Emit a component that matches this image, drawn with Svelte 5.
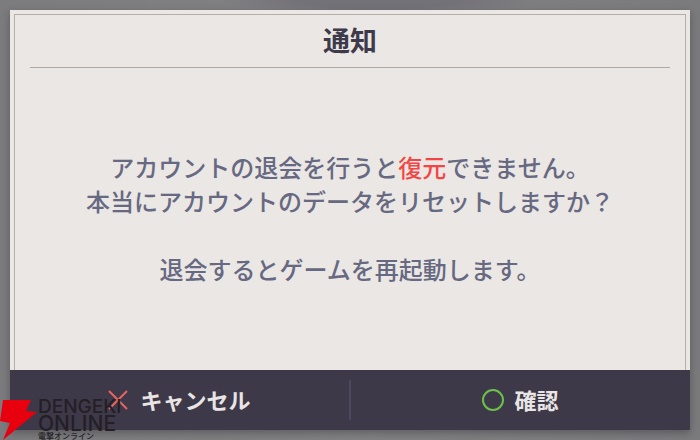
<script lang="ts">
	import { createEventDispatcher } from 'svelte';

	export let title = '通知';

	const dispatch = createEventDispatcher();
</script>

<div class="screen">
	<div class="dialog" role="alertdialog" aria-labelledby="notice-title" aria-describedby="notice-text">
		<div class="content">
			<h1 id="notice-title">{title}</h1>
			<p id="notice-text">
				アカウントの退会を行うと<em>復元</em>できません。<br />
				本当にアカウントのデータをリセットしますか？<br />
				<br />
				退会するとゲームを再起動します。
			</p>
		</div>

		<div class="actions">
			<button class="action-btn" on:click={() => dispatch('cancel')}>
				<svg width="20" height="20" viewBox="0 0 20 20" aria-hidden="true">
					<path d="M1 1L19 19M19 1L1 19" fill="none" stroke="#e9645f" stroke-width="2" />
				</svg>
				<span>キャンセル</span>
			</button>
			<span class="divider"></span>
			<button class="action-btn confirm" on:click={() => dispatch('confirm')}>
				<svg width="22" height="22" viewBox="0 0 22 22" aria-hidden="true">
					<circle cx="11" cy="11" r="10" fill="none" stroke="#6cc04a" stroke-width="2" />
				</svg>
				<span>確認</span>
			</button>
		</div>
	</div>

	<div class="watermark">
		<svg width="37" height="40" viewBox="0 0 37 40" aria-hidden="true">
			<path d="M3 0H31L26 11L37 12L3 40L10 23L0 21Z" fill="#e8000f" />
		</svg>
		<div class="watermark-text">
			<span>DENGEKI</span>
			<span class="wide">ONLINE</span>
			<small>電撃オンライン</small>
		</div>
	</div>
</div>

<style>
	:global(body) { margin: 0; }
	.screen {
		position: relative; display: flex; box-sizing: border-box;
		min-height: 100vh; padding: 10px; overflow: hidden;
		font-family: "Noto Sans CJK JP", sans-serif;
		background:
			radial-gradient(ellipse 160px 16px at 54% 0, #747279 50%, transparent),
			linear-gradient(90deg, #7c7c7e, #828183 50%, #7b7b7d);
	}
	.dialog {
		flex: 1; display: flex; flex-direction: column;
		background: #ebe7e4; box-shadow: 0 3px 8px rgba(50, 50, 55, 0.45);
	}
	.content {
		flex: 1; display: flex; flex-direction: column;
		margin: 4px 4px 0; padding: 0 15px;
		border: 1px solid #b5aea8; border-bottom: none;
	}
	h1 {
		margin: 0; padding: 5px 0 7px; border-bottom: 1px solid #b0a9a3;
		color: #3d3a4b; font-size: 27px; line-height: 40px;
		font-weight: 700; text-align: center;
	}
	p {
		margin: auto 0; padding-bottom: 2px; color: #666981;
		font-size: 24px; line-height: 34px; font-weight: 500; text-align: center;
	}
	em { color: #f44545; font-style: normal; }
	.actions {
		display: flex; align-items: center; height: 60px; background: #3d3949;
	}
	.action-btn {
		flex: 1; display: flex; align-items: center; justify-content: center;
		gap: 12px; height: 100%; padding: 0; border: none; background: none;
		color: #e9e5e4; font-family: inherit; font-size: 22px; font-weight: 700;
		line-height: 32px; cursor: pointer;
	}
	.action-btn span { padding-bottom: 2px; }
	.action-btn.confirm { gap: 10px; }
	.action-btn:hover { background-color: #474357; }
	.divider { width: 2px; height: 40px; background: #4b4860; }
	.watermark {
		position: absolute; left: 0; bottom: 0; display: flex;
		align-items: flex-end; gap: 1px; pointer-events: none;
	}
	.watermark-text {
		display: flex; flex-direction: column; color: #231f25;
		font-family: Inter, sans-serif; font-weight: 500;
		font-size: 19px; line-height: 17px;
	}
	.watermark-text .wide { font-size: 21px; }
	.watermark-text small {
		font-family: "Noto Sans CJK JP", sans-serif;
		font-size: 8px; line-height: 8px; font-weight: 500;
	}
</style>
